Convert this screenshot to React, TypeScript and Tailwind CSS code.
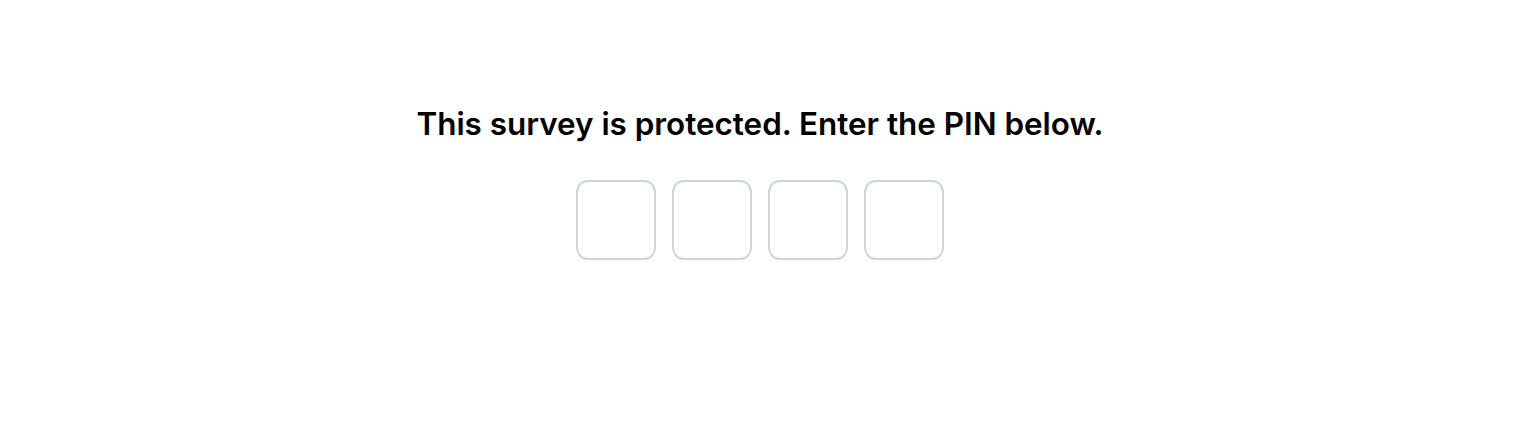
import React from "react";

export default function App() {
  return (
    <div className="w-[1520px] h-[440px] bg-white flex flex-col items-center pt-[104px]" style={{ fontFamily: "Inter, 'Noto Sans', sans-serif" }}>
      <h1 className="text-[31.4px] leading-[40px] font-semibold text-black">This survey is protected. Enter the PIN below.</h1>
      <div className="mt-[36px] flex gap-4">
        {[0, 1, 2, 3].map((i) => (
          <input key={i} type="text" maxLength={1} className="w-20 h-20 rounded-xl border-2 border-slate-300 bg-white outline-none text-center text-2xl" />
        ))}
      </div>
    </div>
  );
}
